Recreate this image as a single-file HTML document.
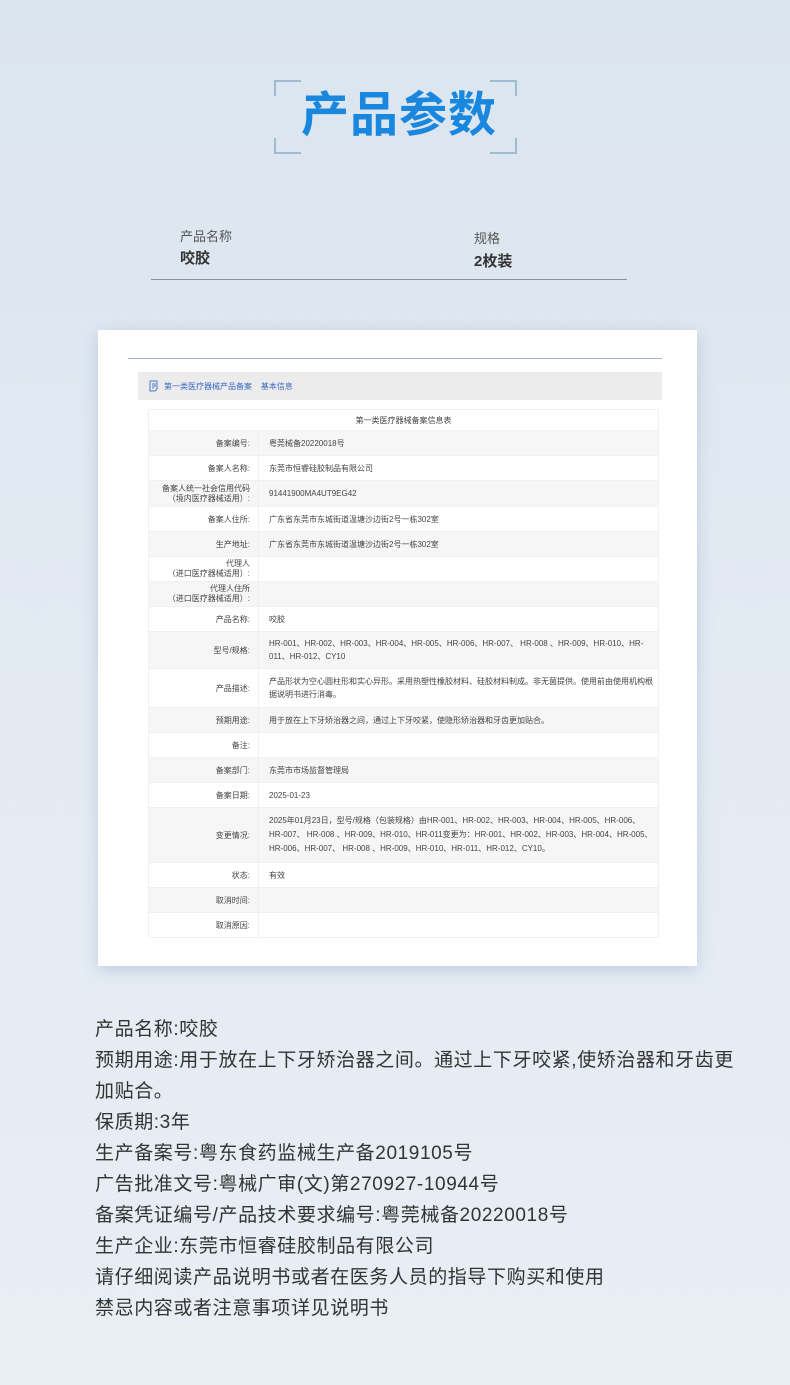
<!DOCTYPE html>
<html><head><meta charset="utf-8"><style>
*{margin:0;padding:0;box-sizing:border-box}
body{width:790px;height:1385px;overflow:hidden;background:linear-gradient(180deg,#dbe5ef 0%,#e3eaf2 50%,#e8eef4 100%);font-family:"Liberation Sans","Noto Sans CJK SC",sans-serif;position:relative;color:#333}
.abs{position:absolute}
.br{position:absolute;width:27px;height:16px;border-color:#9dbbd2;border-style:solid;border-width:0}
h1{position:absolute;left:4px;width:790px;top:86px;text-align:center;font-size:48px;color:#1a87de;font-weight:bold;letter-spacing:1px;line-height:60px}
.lbl{font-size:13px;color:#555}
.val{font-size:15px;font-weight:bold;color:#333}
.card{left:98px;top:330px;width:599px;height:636px;background:#fff;box-shadow:0 4px 14px rgba(120,150,190,.35)}
table{position:absolute;left:148px;top:409px;width:511px;border-collapse:collapse;font-size:8px;color:#444}
td{border:1px solid #f0f0f0;height:25px;line-height:13px}
td.l{width:110px;text-align:right;padding-right:8px}
td.v{padding-left:10px;padding-right:4px}
tr:nth-child(even){background:#f6f6f6}
.txt{left:95px;top:1014px;font-size:19px;letter-spacing:0.6px;line-height:31px;color:#333;white-space:nowrap}
</style></head><body>
<div class="br" style="left:274px;top:80px;border-left-width:2px;border-top-width:2px"></div>
<div class="br" style="left:490px;top:80px;border-right-width:2px;border-top-width:2px"></div>
<div class="br" style="left:274px;top:138px;border-left-width:2px;border-bottom-width:2px"></div>
<div class="br" style="left:490px;top:138px;border-right-width:2px;border-bottom-width:2px"></div>
<h1>产品参数</h1>
<div class="abs lbl" style="left:180px;top:226px">产品名称</div>
<div class="abs val" style="left:180px;top:247px">咬胶</div>
<div class="abs lbl" style="left:474px;top:228px">规格</div>
<div class="abs val" style="left:474px;top:250px">2枚装</div>
<div class="abs" style="left:151px;top:279px;width:476px;height:1px;background:#8a9099"></div>
<div class="abs card"></div>
<div class="abs" style="left:128px;top:358px;width:534px;height:1px;background:#9fb5d8"></div>
<div class="abs" style="left:138px;top:372px;width:524px;height:28px;background:#ececec"></div>
<svg class="abs" style="left:149px;top:380px" width="10" height="12" viewBox="0 0 10 12"><path d="M1 1h7v8l-2 2H1z M3 4h4 M3 6h4 M3 8h2" fill="none" stroke="#4a78c8" stroke-width="1"/></svg>
<div class="abs" style="left:164px;top:381px;font-size:8px;color:#3a68c0">第一类医疗器械产品备案 &nbsp; &nbsp;基本信息</div>
<table>
<tr style="background:#fff"><td colspan="2" style="text-align:center;height:21px">第一类医疗器械备案信息表</td></tr>
<tr><td class="l">备案编号:</td><td class="v">粤莞械备20220018号</td></tr>
<tr style="background:#fff"><td class="l">备案人名称:</td><td class="v">东莞市恒睿硅胶制品有限公司</td></tr>
<tr><td class="l" style="line-height:10px;height:26px">备案人统一社会信用代码<br>（境内医疗器械适用）:</td><td class="v">91441900MA4UT9EG42</td></tr>
<tr style="background:#fff"><td class="l">备案人住所:</td><td class="v">广东省东莞市东城街道温塘沙边街2号一栋302室</td></tr>
<tr><td class="l">生产地址:</td><td class="v">广东省东莞市东城街道温塘沙边街2号一栋302室</td></tr>
<tr style="background:#fff"><td class="l" style="line-height:10px;height:24px">代理人<br>（进口医疗器械适用）:</td><td class="v"></td></tr>
<tr><td class="l" style="line-height:10px;height:23px">代理人住所<br>（进口医疗器械适用）:</td><td class="v"></td></tr>
<tr style="background:#fff"><td class="l">产品名称:</td><td class="v">咬胶</td></tr>
<tr><td class="l" style="height:37px">型号/规格:</td><td class="v">HR-001、HR-002、HR-003、HR-004、HR-005、HR-006、HR-007、 HR-008 、HR-009、HR-010、HR-011、HR-012、CY10</td></tr>
<tr style="background:#fff"><td class="l" style="height:39px">产品描述:</td><td class="v">产品形状为空心圆柱形和实心异形。采用热塑性橡胶材料、硅胶材料制成。非无菌提供。使用前由使用机构根据说明书进行消毒。</td></tr>
<tr><td class="l">预期用途:</td><td class="v">用于放在上下牙矫治器之间，通过上下牙咬紧，使隐形矫治器和牙齿更加贴合。</td></tr>
<tr style="background:#fff"><td class="l" style="height:24px">备注:</td><td class="v"></td></tr>
<tr><td class="l" style="height:24px">备案部门:</td><td class="v">东莞市市场监督管理局</td></tr>
<tr style="background:#fff"><td class="l">备案日期:</td><td class="v">2025-01-23</td></tr>
<tr><td class="l" style="height:55px">变更情况:</td><td class="v" style="line-height:14px">2025年01月23日，型号/规格（包装规格）由HR-001、HR-002、HR-003、HR-004、HR-005、HR-006、HR-007、 HR-008 、HR-009、HR-010、HR-011变更为：HR-001、HR-002、HR-003、HR-004、HR-005、HR-006、HR-007、 HR-008 、HR-009、HR-010、HR-011、HR-012、CY10。</td></tr>
<tr style="background:#fff"><td class="l">状态:</td><td class="v">有效</td></tr>
<tr><td class="l" style="height:23px">取消时间:</td><td class="v"></td></tr>
<tr style="background:#fff"><td class="l" style="height:24px">取消原因:</td><td class="v"></td></tr>
</table>
<div class="abs txt">产品名称:咬胶<br>预期用途:用于放在上下牙矫治器之间。通过上下牙咬紧,使矫治器和牙齿更<br>加贴合。<br>保质期:3年<br>生产备案号:粤东食药监械生产备2019105号<br>广告批准文号:粤械广审(文)第270927-10944号<br>备案凭证编号/产品技术要求编号:粤莞械备20220018号<br>生产企业:东莞市恒睿硅胶制品有限公司<br>请仔细阅读产品说明书或者在医务人员的指导下购买和使用<br>禁忌内容或者注意事项详见说明书</div>
</body></html>
